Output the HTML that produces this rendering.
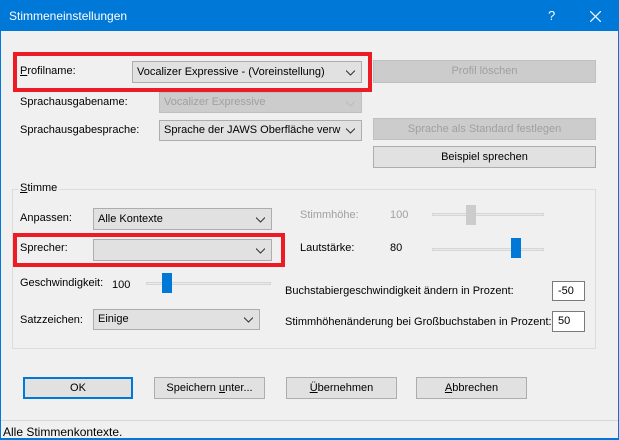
<!DOCTYPE html>
<html><head><style>
*{margin:0;padding:0;box-sizing:border-box}
body{width:619px;height:440px;overflow:hidden;background:#f0f0f0;font-family:"Liberation Sans",sans-serif;font-size:11px;color:#000;position:relative}
.a{position:absolute;white-space:nowrap}
.win{position:absolute;left:0;top:0;width:619px;height:440px;border:1px solid #0078d7;border-top:none}
.title{left:0;top:0;width:619px;height:31px;background:#0078d7;color:#fff;font-size:12px}
.cb{position:absolute;background:#e1e1e1;border:1px solid #adadad;padding-left:4px;line-height:20px;overflow:hidden}
.cb svg{position:absolute;right:6px;top:8px}
.btn{position:absolute;background:#e1e1e1;border:1px solid #adadad;text-align:center;line-height:20px}
.dis{color:#a0a0a0;background:#cccccc;border-color:#bfbfbf}
.red{position:absolute;border:4px solid #ed1c24}
.tb{position:absolute;height:3px;background:#e7eaea;border:1px solid #d6d6d6}
.th{position:absolute;width:10px;height:20px;background:#0078d7}
.ed{position:absolute;background:#fff;border:1px solid #7a7a7a;padding-left:5px;line-height:18px}
u{text-decoration:underline}
</style></head><body>
<div class="win"></div>
<div class="a title"><span class="a" style="left:9px;top:9px">Stimmeneinstellungen</span><span class="a" style="left:548px;top:8px;font-size:13px">?</span>
<svg class="a" style="left:590px;top:11px" width="11" height="11"><path d="M0 0L11 11M11 0L0 11" stroke="#fff" stroke-width="1.2"/></svg></div>

<div class="red" style="left:13px;top:52px;width:359px;height:40px"></div>
<span class="a" style="left:20px;top:65px"><u>P</u>rofilname:</span>
<div class="cb" style="left:132px;top:61px;width:230px;height:22px">Vocalizer Expressive - (Voreinstellung)<svg width="9" height="6"><path d="M0 0.5L4.5 5L9 0.5" fill="none" stroke="#333"/></svg></div>
<div class="btn dis" style="left:373px;top:60px;width:223px;height:23px;line-height:21px">Profil löschen</div>

<span class="a" style="left:20px;top:96px">Sprachausgabename:</span>
<div class="cb dis" style="left:159px;top:92px;width:203px;height:21px;line-height:19px">Vocalizer Expressive<svg width="9" height="6"><path d="M0 0.5L4.5 5L9 0.5" fill="none" stroke="#bbb"/></svg></div>
<span class="a" style="left:20px;top:124px">Sprachausgabesprache:</span>
<div class="cb" style="left:159px;top:120px;width:203px;height:21px;line-height:19px">Sprache der JAWS Oberfläche verw<svg width="9" height="6" style="top:7px"><path d="M0 0.5L4.5 5L9 0.5" fill="none" stroke="#333"/></svg></div>
<div class="btn dis" style="left:373px;top:118px;width:223px;height:22px">Sprache als Standard festlegen</div>
<div class="btn" style="left:373px;top:146px;width:223px;height:22px">Beispiel sprechen</div>

<div class="a" style="left:12px;top:189px;width:584px;height:160px;border:1px solid #dcdcdc"></div>
<span class="a" style="left:18px;top:182px;background:#f0f0f0;padding:0 2px"><u>S</u>timme</span>

<span class="a" style="left:20px;top:212px">Anpassen:</span>
<div class="cb" style="left:93px;top:208px;width:179px;height:22px">Alle Kontexte<svg width="9" height="6"><path d="M0 0.5L4.5 5L9 0.5" fill="none" stroke="#333"/></svg></div>
<span class="a" style="left:300px;top:209px;color:#a0a0a0">Stimmhöhe:</span>
<span class="a" style="left:390px;top:209px;color:#a0a0a0">100</span>
<div class="tb" style="left:432px;top:213px;width:112px"></div>
<div class="th" style="left:466px;top:205px;background:#ccc"></div>

<div class="red" style="left:13px;top:233px;width:272px;height:34px"></div>
<span class="a" style="left:20px;top:242px">Sprecher:</span>
<div class="cb" style="left:93px;top:239px;width:179px;height:22px"><svg width="9" height="6"><path d="M0 0.5L4.5 5L9 0.5" fill="none" stroke="#333"/></svg></div>
<span class="a" style="left:300px;top:242px">Lautstärke:</span>
<span class="a" style="left:390px;top:242px">80</span>
<div class="tb" style="left:432px;top:248px;width:112px"></div>
<div class="th" style="left:511px;top:238px"></div>

<span class="a" style="left:20px;top:277px">Geschwindigkeit:</span>
<span class="a" style="left:112px;top:279px">100</span>
<div class="tb" style="left:146px;top:282px;width:125px"></div>
<div class="th" style="left:162px;top:273px"></div>
<span class="a" style="left:285px;top:285px">Buchstabiergeschwindigkeit ändern in Prozent:</span>
<div class="ed" style="left:552px;top:281px;width:33px;height:20px">-50</div>

<span class="a" style="left:20px;top:314px">Satzzeichen:</span>
<div class="cb" style="left:93px;top:309px;width:167px;height:21px;line-height:18px">Einige<svg width="9" height="6" style="top:7px"><path d="M0 0.5L4.5 5L9 0.5" fill="none" stroke="#333"/></svg></div>
<span class="a" style="left:285px;top:316px">Stimmhöhenänderung bei Großbuchstaben in Prozent:</span>
<div class="ed" style="left:552px;top:311px;width:33px;height:21px">50</div>

<div class="btn" style="left:23px;top:377px;width:110px;height:22px;line-height:18px;border:2px solid #0078d7">OK</div>
<div class="btn" style="left:154px;top:377px;width:111px;height:22px">Speichern <u>u</u>nter...</div>
<div class="btn" style="left:286px;top:377px;width:111px;height:22px"><u>Ü</u>bernehmen</div>
<div class="btn" style="left:416px;top:377px;width:111px;height:22px"><u>A</u>bbrechen</div>

<div class="a" style="left:1px;top:420px;width:617px;height:1px;background:#d7d7d7"></div>
<span class="a" style="left:3px;top:425px;font-size:12px">Alle Stimmenkontexte.</span>
<div class="a" style="left:0;top:438px;width:619px;height:2px;background:#0078d7"></div>
</body></html>
